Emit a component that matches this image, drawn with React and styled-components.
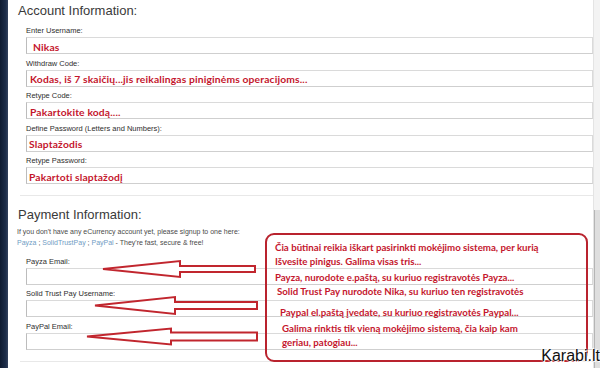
import React from 'react'
import styled, { createGlobalStyle } from 'styled-components'

const GlobalStyle = createGlobalStyle`
  html, body {
    margin: 0;
    padding: 0;
  }
  body {
    width: 600px;
    height: 368px;
    overflow: hidden;
    background: #fff;
    font-family: "Liberation Sans", Arial, sans-serif;
  }
`

const accountFields = [
    { label: 'Enter Username:', value: 'Nikas', indent: 6 },
    { label: 'Withdraw Code:', value: 'Kodas, iš 7 skaičių...jis reikalingas piniginėms operacijoms...', indent: 3 },
    { label: 'Retype Code:', value: 'Pakartokite kodą....', indent: 3 },
    { label: 'Define Password (Letters and Numbers):', value: 'Slaptažodis', indent: 2 },
    { label: 'Retype Password:', value: 'Pakartoti slaptažodį', indent: 2 },
]

const paymentFields = ['Payza Email:', 'Solid Trust Pay Username:', 'PayPal Email:']

const notes = [
    { lines: ['Čia būtinai reikia iškart pasirinkti mokėjimo sistema, per kurią', 'Išvesite pinigus. Galima visas tris...'], indent: 8, gap: 0 },
    { lines: ['Payza, nurodote e.paštą, su kuriuo registravotės Payza...'], indent: 8, gap: 1 },
    { lines: ['Solid Trust Pay nurodote Nika, su kuriuo ten registravotės'], indent: 10, gap: 0 },
    { lines: ['Paypal el.paštą įvedate, su kuriuo registravotės Paypal...'], indent: 13, gap: 6 },
    { lines: ['Galima rinktis tik vieną mokėjimo sistemą, čia kaip kam', 'geriau, patogiau...'], indent: 15, gap: 1.5 },
]

// arrow tips / head base / tail, in Main coordinates
const arrows = [
    { tip: 95, base: 172, tail: 247, y: 269, head: 8, shaft: 3 },
    { tip: 87, base: 167, tail: 249, y: 305.5, head: 8.5, shaft: 3.5 },
    { tip: 79, base: 163, tail: 249, y: 336.5, head: 8, shaft: 4 },
]

function arrowPoints({ tip, base, tail, y, head, shaft }) {
    return [
        [tip, y], [base, y - head], [base, y - shaft], [tail, y - shaft],
        [tail, y + shaft], [base, y + shaft], [base, y + head],
    ].map(p => p.join(',')).join(' ')
}

function App() {
    return (
        <Page>
            <GlobalStyle />
            <SideEdge />
            <Main>
                <Heading>Account Information:</Heading>
                <FieldList top={5}>
                    {accountFields.map(f => (
                        <Field key={f.label}>
                            <Label>{f.label}</Label>
                            <InputBox indent={f.indent}>
                                <Filled>{f.value}</Filled>
                            </InputBox>
                        </Field>
                    ))}
                </FieldList>
                <Divider top={11} />
                <Heading top={8}>Payment Information:</Heading>
                <Intro>
                    If you don't have any eCurrency account yet, please signup to one here:<br />
                    <Provider>Payza</Provider> ; <Provider>SolidTrustPay</Provider> ; <Provider>PayPal</Provider> - They're fast, secure &amp; free!
                </Intro>
                <FieldList top={7.5}>
                    {paymentFields.map(label => (
                        <Field key={label}>
                            <Label>{label}</Label>
                            <InputBox />
                        </Field>
                    ))}
                </FieldList>
                <Divider top={11.5} />

                <Arrows width="585" height="368" viewBox="0 0 585 368">
                    {arrows.map((a, i) => (
                        <polygon key={i} points={arrowPoints(a)} fill="#fff" stroke="#c1262e" strokeWidth="2" strokeLinejoin="miter" />
                    ))}
                </Arrows>
                <Callout>
                    {notes.map((n, i) => (
                        <Note key={i} indent={n.indent} gap={n.gap}>
                            {n.lines.map(l => <div key={l}>{l}</div>)}
                        </Note>
                    ))}
                </Callout>
            </Main>
            <ScrollTrack>
                <ScrollThumb />
            </ScrollTrack>
            <Watermark>Karabi.lt</Watermark>
        </Page>
    )
}

const Page = styled.div`
    position: relative;
    display: flex;
    width: 600px;
    height: 368px;
    overflow: hidden;
`

const SideEdge = styled.div`
    flex: none;
    width: 8px;
    background: linear-gradient(to right, #0e1a30, #1c2c48 70%, #33425d);
`

const Main = styled.div`
    position: relative;
    flex: 1;
    padding-left: 10px;
    background: #fff;
`

const Heading = styled.h2`
    margin: ${({ top }) => top || 0}px 0 0;
    height: 20px;
    font-size: 13px;
    line-height: 21px;
    font-weight: normal;
    color: #3a3a3a;
`

const FieldList = styled.div`
    margin-left: 8px;
    padding-top: ${({ top }) => top}px;
`

const Field = styled.div`
    display: flex;
    flex-direction: column;
    margin-bottom: 3.5px;

    &:last-child {
        margin-bottom: 0;
    }
`

const Label = styled.label`
    height: 12px;
    font-size: 7.5px;
    line-height: 12px;
    color: #2e2e2e;
`

const InputBox = styled.div`
    display: flex;
    align-items: center;
    box-sizing: border-box;
    height: 17px;
    padding-left: ${({ indent }) => indent || 0}px;
    border: 1px solid #dadada;
    border-left-color: #bcbcbc;
    border-bottom-color: #cfcfcf;
    background: #fff;
`

const Filled = styled.span`
    margin-top: 2px;
    font-family: Lato, "Open Sans", sans-serif;
    font-weight: 700;
    font-size: 10.3px;
    letter-spacing: 0.15px;
    color: #c4162d;
    white-space: nowrap;
`

const Divider = styled.div`
    margin: ${({ top }) => top}px 0 0 2px;
    height: 1px;
    background: #e8e8e8;
`

const Intro = styled.p`
    margin: 2px 0 0 -1px;
    font-size: 7px;
    line-height: 11px;
    color: #4a4a4a;
`

const Provider = styled.span`
    color: #6f9cc4;
`

const Arrows = styled.svg`
    position: absolute;
    left: 0;
    top: 0;
    pointer-events: none;
`

const Callout = styled.div`
    position: absolute;
    left: 257px;
    top: 233px;
    width: 323px;
    height: 129px;
    box-sizing: border-box;
    padding-top: 4.75px;
    border: 2px solid #b9232e;
    border-radius: 9px;
    font-family: Lato, "Open Sans", sans-serif;
    font-weight: 700;
    font-size: 9.7px;
    line-height: 14.5px;
    color: #c4162d;
`

const Note = styled.div`
    margin-top: ${({ gap }) => gap}px;
    padding-left: ${({ indent }) => indent}px;
    white-space: nowrap;
`

const ScrollTrack = styled.div`
    flex: none;
    display: flex;
    flex-direction: column;
    width: 6px;
    border-left: 1px solid #e4e4e4;
    background: #f3f3f3;
`

const ScrollThumb = styled.div`
    flex: 1;
    margin-top: 210px;
    border-left: 1px solid #b5b5b5;
    background: #dedede;
`

const Watermark = styled.div`
    position: absolute;
    right: 0;
    bottom: 4px;
    font-size: 16px;
    line-height: 16px;
    color: #111;
    text-shadow: 0 0 2px #fff, 0 0 2px #fff, 1px 1px 0 #fff, -1px -1px 0 #fff;
`

export default App
